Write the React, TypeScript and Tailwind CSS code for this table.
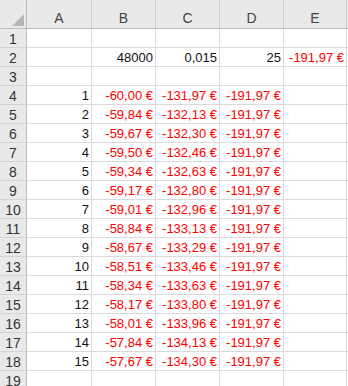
import React from "react";

const B = ["-60,00","-59,84","-59,67","-59,50","-59,34","-59,17","-59,01","-58,84","-58,67","-58,51","-58,34","-58,17","-58,01","-57,84","-57,67"];
const C = ["-131,97","-132,13","-132,30","-132,46","-132,63","-132,80","-132,96","-133,13","-133,29","-133,46","-133,63","-133,80","-133,96","-134,13","-134,30"];

type Cell = { t: string; red?: boolean };

function rowData(r: number): Cell[] {
  if (r === 2) return [{ t: "" }, { t: "48000" }, { t: "0,015" }, { t: "25" }, { t: "-191,97 €", red: true }];
  if (r >= 4 && r <= 18) {
    const i = r - 4;
    return [
      { t: String(i + 1) },
      { t: B[i] + " €", red: true },
      { t: C[i] + " €", red: true },
      { t: "-191,97 €", red: true },
      { t: "" },
    ];
  }
  return [{ t: "" }, { t: "" }, { t: "" }, { t: "" }, { t: "" }];
}

const cols = "grid grid-cols-[27px_65px_64px_64px_64px_63px_1fr]";

export default function App() {
  const rows = Array.from({ length: 19 }, (_, i) => i + 1);
  return (
    <div
      className="w-[348px] h-[386px] overflow-hidden bg-white"
      style={{ fontFamily: '"Liberation Sans", Arial, sans-serif' }}
    >
      <div className={`${cols} h-[29px] bg-[#e9e9e9] border-b border-[#bdbdbd]`}>
        <div className="relative border-r border-[#bdbdbd]">
          <svg className="absolute left-[12px] top-[14px]" width="12" height="12" viewBox="0 0 12 12">
            <polygon points="12,0 12,12 0,12" fill="#b5b5b5" />
          </svg>
        </div>
        {["A", "B", "C", "D", "E"].map((l) => (
          <div key={l} className="flex items-end justify-center pb-[3px] border-r border-[#cfcfcf] text-[14px] leading-none text-[#444]">
            {l}
          </div>
        ))}
        <div />
      </div>
      {rows.map((r) => (
        <div key={r} className={`${cols} h-[19px]`}>
          <div className="flex items-end justify-center pb-[1px] bg-[#e9e9e9] border-r border-b border-r-[#bdbdbd] border-b-[#d4d4d4] text-[14px] leading-none text-[#333]">
            {r}
          </div>
          {rowData(r).map((c, j) => (
            <div
              key={j}
              className={`flex items-end justify-end pr-[2px] pb-[2px] border-r border-b border-[#dadada] text-[13px] leading-none whitespace-nowrap ${c.red ? "text-[#ff0000]" : "text-[#111]"}`}
            >
              {c.t}
            </div>
          ))}
          <div className="border-b border-[#dadada]" />
        </div>
      ))}
    </div>
  );
}
